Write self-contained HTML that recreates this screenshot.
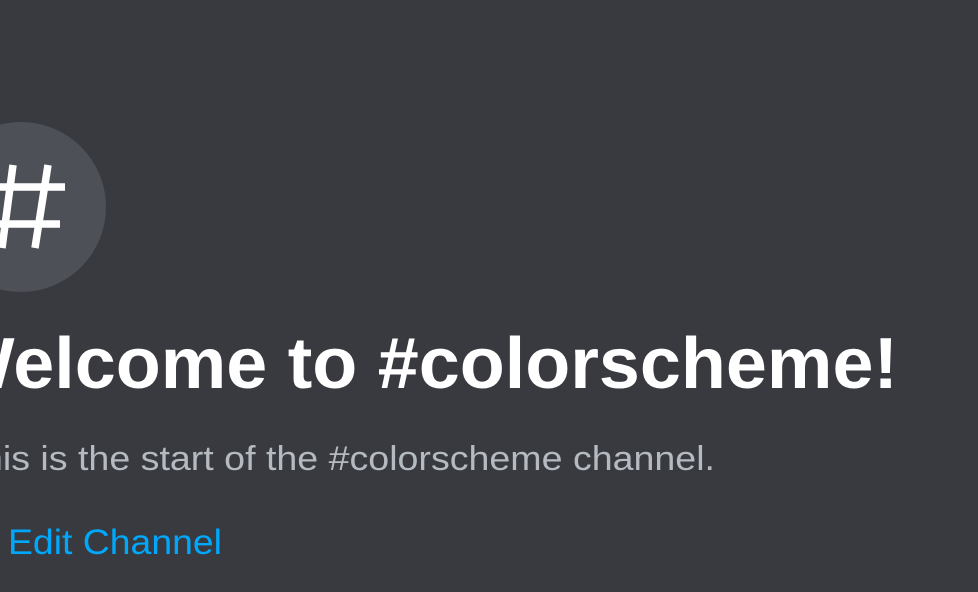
<!DOCTYPE html>
<html><head><meta charset="utf-8"><style>
html,body{margin:0;padding:0;width:978px;height:592px;overflow:hidden;background:#383a40}
svg{position:absolute;left:0;top:0}
</style></head><body>
<svg width="978" height="592" viewBox="0 0 978 592">
<circle cx="21" cy="207" r="85" fill="#4e5058"/>
<g stroke="#fff" stroke-width="7.5" fill="none">
<line x1="13" y1="165" x2="2" y2="248"/>
<line x1="48" y1="165" x2="35" y2="248"/>
<line x1="-10" y1="187" x2="65" y2="187"/>
<line x1="-10" y1="224" x2="60" y2="224"/>
</g>
<text x="-55" y="388" font-family="Liberation Sans, sans-serif" font-weight="bold" font-size="72" fill="#ffffff" textLength="953" lengthAdjust="spacingAndGlyphs">Welcome to #colorscheme!</text>
<text x="-41" y="470" font-family="Liberation Sans, sans-serif" font-size="34" fill="#b5bac1" textLength="756" lengthAdjust="spacingAndGlyphs">This is the start of the #colorscheme channel.</text>
<text x="8" y="554" font-family="Liberation Sans, sans-serif" font-size="35" fill="#00a8fc" textLength="214" lengthAdjust="spacingAndGlyphs">Edit Channel</text>
</svg>
</body></html>
